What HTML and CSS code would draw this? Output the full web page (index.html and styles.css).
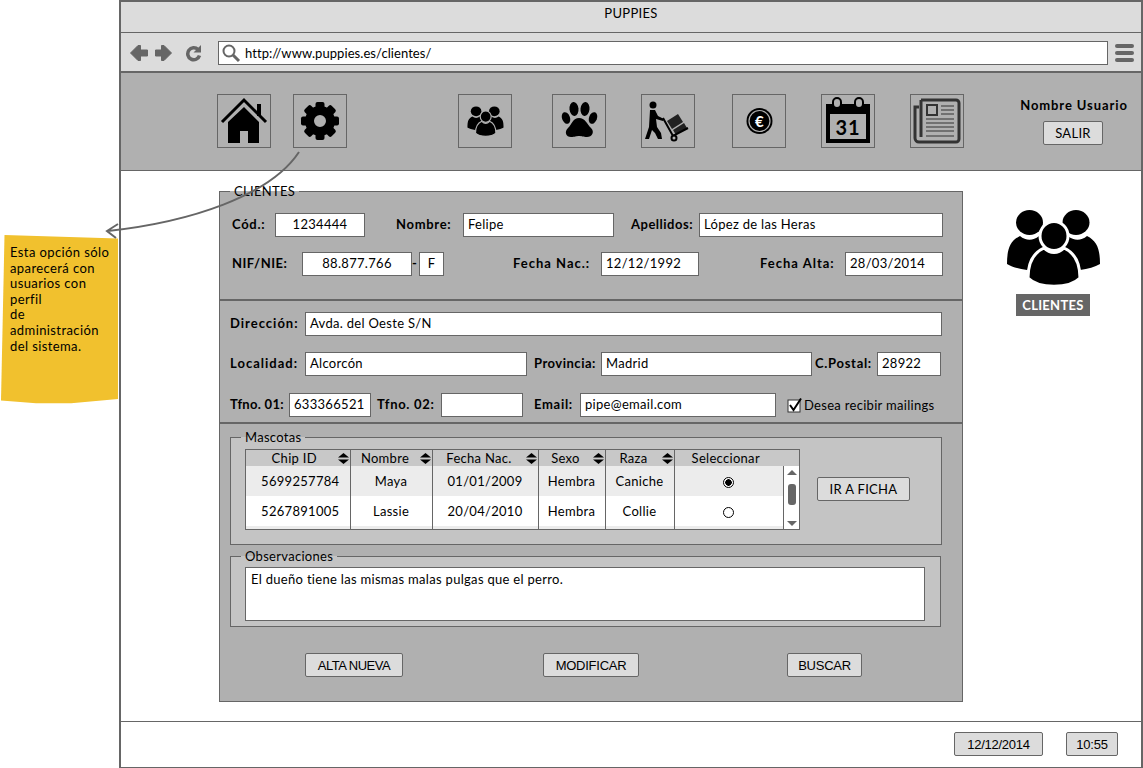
FILE: index.html
```html
<!DOCTYPE html>
<html lang="es">

<head>
    <meta charset="UTF-8">
    <title>Puppies - Clientes</title>
    <link rel="stylesheet" href="styles.css">
</head>

<body>
    <!-- Shared icons -->
    <svg class="defs" width="0" height="0">
        <symbol id="users" viewBox="0 0 93 79">
            <ellipse cx="22.500" cy="13.500" rx="13.500" ry="12.500" />
            <ellipse cx="69" cy="13.500" rx="13.500" ry="12.500" />
            <path d="M0 55C0 40 3 32 13 27C19 32 26 32 32 27C36 29 38 32 39 36L28 62L20 61C12 60 5 58 0 55Z" />
            <path d="M93 55C93 40 90 32 80 27C74 32 67 32 61 27C57 29 55 32 54 36L65 62L73 61C81 60 88 58 93 55Z" />
            <ellipse cx="47" cy="27" rx="14" ry="14.500" class="user-gap" />
            <path d="M21 69C21 52 28 43 37 39C43 45 51 45 57 39C66 43 73 52 73 69C62 80 32 80 21 69Z" class="user-gap" />
        </symbol>
        <symbol id="sort" viewBox="0 0 11 11">
            <path d="M5.500 0L11 4.500H0ZM0 6.500H11L5.500 11Z" />
        </symbol>
    </svg>

    <!-- Note with its arrow -->
    <aside class="note">Esta opción sólo<br>aparecerá con<br>usuarios con<br>perfil<br>de<br>administración<br>del sistema.</aside>
    <svg class="arrow" width="1143" height="768" viewBox="0 0 1143 768">
        <path d="M299 152C270 196 190 222 108 231M118 224L107 231L116 238" />
    </svg>

    <div class="window">
        <div class="titlebar">PUPPIES</div>

        <div class="toolbar">
            <svg class="tool-nav" width="72" height="18" viewBox="0 0 72 18">
                <path d="M0.500 9L8 1.500H10.500V6H17.500V12H10.500V16.500H8Z" class="nav-arrow" />
                <path d="M41.500 9L34 1.500H31.500V6H25.500V12H31.500V16.500H34Z" class="nav-arrow" />
                <path d="M68 5.500A6 6 0 1 0 69.500 11.500" class="reload" />
                <path d="M71 1V8.500H63.500Z" />
            </svg>
            <div class="urlbar">
                <svg width="20" height="20" viewBox="0 0 20 20">
                    <circle cx="8" cy="8" r="5.500" class="glass" />
                    <path d="M12 12L18 18" class="glass-handle" />
                </svg>
                <span class="url-text">http://www.puppies.es/clientes/</span>
            </div>
            <div class="burger"><i></i><i></i><i></i></div>
        </div>

        <nav class="topnav">
            <div class="navbox ico-home">
                <svg width="52" height="52" viewBox="0 0 52 52">
                    <path d="M4 27L26 5L48 27" class="roof" />
                    <rect x="39" y="9" width="4" height="12" />
                    <path d="M10 27L26 12L41 27V48H30V36H22V48H10Z" />
                </svg>
            </div>
            <div class="navbox ico-gear">
                <svg width="52" height="52" viewBox="0 0 52 52">
                    <g>
                        <rect x="21.500" y="7" width="9" height="38" rx="2" />
                        <rect x="21.500" y="7" width="9" height="38" rx="2" transform="rotate(45 26 26)" />
                        <rect x="21.500" y="7" width="9" height="38" rx="2" transform="rotate(90 26 26)" />
                        <rect x="21.500" y="7" width="9" height="38" rx="2" transform="rotate(135 26 26)" />
                    </g>
                    <circle cx="26" cy="26" r="10.500" class="gear-ring" />
                </svg>
            </div>
            <div class="navbox ico-users">
                <svg width="37" height="31" viewBox="0 0 93 79"><use href="#users" /></svg>
            </div>
            <div class="navbox ico-paw">
                <svg width="52" height="52" viewBox="0 0 52 52">
                    <ellipse cx="13" cy="23" rx="4" ry="6" transform="rotate(-20 13 23)" />
                    <ellipse cx="21" cy="14" rx="4.500" ry="7" transform="rotate(-6 21 14)" />
                    <ellipse cx="32" cy="14" rx="4.500" ry="7" transform="rotate(6 32 14)" />
                    <ellipse cx="40" cy="23" rx="4" ry="6" transform="rotate(20 40 23)" />
                    <path d="M26 23C32 23 34 29 38 33C42 37 39 42 34 42C30 42 29 41 26 41C23 41 22 42 18 42C13 42 11 37 15 33C19 29 20 23 26 23Z" />
                </svg>
            </div>
            <div class="navbox ico-delivery">
                <svg width="52" height="52" viewBox="0 0 52 52">
                    <circle cx="11" cy="10" r="3.500" />
                    <path d="M8 15H13L16 21L22 24L21 26L14 24L15 32L19 38L20 44H16L13 38L10 35L7 44H3L7 32Z" />
                    <path d="M25 26L36 19L41 27L30 34Z" class="crate" />
                    <path d="M31 35L42 28L45 33L34 40Z" class="crate" />
                    <path d="M21 23L31 41L46 33" class="truck" />
                    <circle cx="32" cy="43" r="2.500" class="wheel" />
                </svg>
            </div>
            <div class="navbox ico-euro">
                <svg width="52" height="52" viewBox="0 0 52 52">
                    <circle cx="26.500" cy="26" r="13" />
                    <circle cx="26.500" cy="26" r="10.500" class="coin-line" />
                    <text x="26.500" y="31.500" class="coin-sign">€</text>
                </svg>
            </div>
            <div class="navbox ico-calendar">
                <svg width="52" height="52" viewBox="0 0 52 52">
                    <path d="M4 9H48V48H4Z" />
                    <rect x="8" y="19" width="36" height="25" fill="#b0b0b0" />
                    <rect x="11" y="3" width="8" height="10" rx="4" class="ring" />
                    <rect x="33" y="3" width="8" height="10" rx="4" class="ring" />
                    <text x="26" y="40" class="cal-num">31</text>
                </svg>
            </div>
            <div class="navbox ico-news">
                <svg width="52" height="52" viewBox="0 0 52 52">
                    <path d="M10 5H45A3 3 0 0 1 48 8V44A3 3 0 0 1 45 47H8A4 4 0 0 1 4 43V12H8M10 5V42" class="news" />
                    <rect x="16" y="10" width="10" height="10" class="news-pic" />
                    <path d="M30 11H43M30 15H43M30 19H43M15 24H43M15 28H43M15 32H43M15 36H43M15 41H43" class="news-thin" />
                </svg>
            </div>
            <div class="user-box">
                <div class="user-name">Nombre Usuario</div>
                <div class="btn btn-salir">SALIR</div>
            </div>
        </nav>

        <main class="content">
            <fieldset class="panel">
                <legend>CLIENTES</legend>

                <section class="sec sec-ident">
                    <div class="row">
                        <span class="lbl w43">Cód.:</span>
                        <div class="field center w90">1234444</div>
                        <span class="lbl w67 ml31">Nombre:</span>
                        <div class="field w151">Felipe</div>
                        <span class="lbl tight w68 ml17">Apellidos:</span>
                        <div class="field w244">López de las Heras</div>
                    </div>
                    <div class="row">
                        <span class="lbl tight w70">NIF/NIE:</span>
                        <div class="field center w110">88.877.766</div>
                        <span class="lbl w7">-</span>
                        <div class="field center w25">F</div>
                        <span class="lbl wide w88 ml69">Fecha Nac.:</span>
                        <div class="field w98">12/12/1992</div>
                        <span class="lbl wide w85 ml61">Fecha Alta:</span>
                        <div class="field w98">28/03/2014</div>
                    </div>
                </section>

                <section class="sec sec-address">
                    <div class="row">
                        <span class="lbl wide w75">Dirección:</span>
                        <div class="field w637">Avda. del Oeste S/N</div>
                    </div>
                    <div class="row">
                        <span class="lbl wide w75">Localidad:</span>
                        <div class="field w222">Alcorcón</div>
                        <span class="lbl tight w67 ml7">Provincia:</span>
                        <div class="field w211">Madrid</div>
                        <span class="lbl w62 ml3">C.Postal:</span>
                        <div class="field w64">28922</div>
                    </div>
                    <div class="row">
                        <span class="lbl slim w59">Tfno. 01:</span>
                        <div class="field w82">633366521</div>
                        <span class="lbl w64 ml6">Tfno. 02:</span>
                        <div class="field w82"></div>
                        <span class="lbl w46 ml11">Email:</span>
                        <div class="field w196">pipe@email.com</div>
                        <svg class="check" width="16" height="16" viewBox="0 0 16 16">
                            <rect x="1" y="3" width="12" height="12" class="check-box" />
                            <path d="M3 8L6.500 13L14 1.500" class="check-mark" />
                        </svg>
                        <span class="mail-text">Desea recibir mailings</span>
                    </div>
                </section>

                <section class="sec sec-lower">
                    <fieldset class="group group-pets">
                        <legend>Mascotas</legend>
                        <div class="pets-inner">
                            <div class="grid-wrap">
                                <table class="pets">
                                    <colgroup>
                                        <col class="c-chip"><col class="c-name"><col class="c-date"><col class="c-sex"><col class="c-breed"><col>
                                    </colgroup>
                                    <thead>
                                        <tr>
                                            <th><div class="th-in"><span>Chip ID</span><svg width="11" height="11"><use href="#sort" /></svg></div></th>
                                            <th><div class="th-in"><span>Nombre</span><svg width="11" height="11"><use href="#sort" /></svg></div></th>
                                            <th><div class="th-in"><span>Fecha Nac.</span><svg width="11" height="11"><use href="#sort" /></svg></div></th>
                                            <th><div class="th-in"><span>Sexo</span><svg width="11" height="11"><use href="#sort" /></svg></div></th>
                                            <th><div class="th-in"><span>Raza</span><svg width="11" height="11"><use href="#sort" /></svg></div></th>
                                            <th class="th-select">Seleccionar</th>
                                        </tr>
                                    </thead>
                                    <tbody>
                                        <tr>
                                            <td>5699257784</td><td>Maya</td><td>01/01/2009</td><td>Hembra</td><td>Caniche</td>
                                            <td class="td-radio"><span class="radio on"></span></td>
                                        </tr>
                                        <tr>
                                            <td>5267891005</td><td>Lassie</td><td>20/04/2010</td><td>Hembra</td><td>Collie</td>
                                            <td class="td-radio"><span class="radio"></span></td>
                                        </tr>
                                        <tr>
                                            <td></td><td></td><td></td><td></td><td></td><td></td>
                                        </tr>
                                    </tbody>
                                </table>
                                <div class="scrollbar">
                                    <i class="sb-up"></i>
                                    <i class="sb-thumb"></i>
                                    <i class="sb-down"></i>
                                </div>
                            </div>
                            <div class="btn btn-ficha">IR A FICHA</div>
                        </div>
                    </fieldset>

                    <fieldset class="group group-notes">
                        <legend>Observaciones</legend>
                        <div class="notes-box">El dueño tiene las mismas malas pulgas que el perro.</div>
                    </fieldset>

                    <div class="actions">
                        <div class="btn btn-plain btn-alta">ALTA NUEVA</div>
                        <div class="btn btn-plain btn-mod">MODIFICAR</div>
                        <div class="btn btn-plain btn-buscar">BUSCAR</div>
                    </div>
                </section>
            </fieldset>

            <div class="side">
                <svg width="93" height="79" viewBox="0 0 93 79"><use href="#users" /></svg>
                <div class="side-label">CLIENTES</div>
            </div>
        </main>

        <footer class="statusbar">
            <div class="btn btn-plain btn-date">12/12/2014</div>
            <div class="btn btn-plain btn-time">10:55</div>
        </footer>
    </div>
</body>

</html>
```

FILE: styles.css
```css
/* Global Reset */
* {
    margin: 0;
    padding: 0;
    box-sizing: border-box;
}

body {
    width: 1143px;
    height: 768px;
    overflow: hidden;
    position: relative;
    background: #fff;
    color: #000;
    font-family: 'Lato', 'Liberation Sans', sans-serif;
    font-size: 13px;
    letter-spacing: 0.3px;
}

.defs {
    position: absolute;
}

.user-gap {
    stroke: var(--gap);
    stroke-width: 3;
}

/* Note and arrow */
.note {
    position: absolute;
    left: 1px;
    top: 235px;
    width: 117px;
    height: 169px;
    padding: 10px 0 0 9px;
    line-height: 15.6px;
    letter-spacing: 0.4px;
    background: #f1c12e;
    clip-path: polygon(3% 0, 100% 2%, 100% 97%, 60% 99.500%, 30% 99.500%, 0 98%);
    white-space: nowrap;
}

.arrow {
    position: absolute;
    left: 0;
    top: 0;
    z-index: 2;
    pointer-events: none;
}

.arrow path {
    fill: none;
    stroke: #666;
    stroke-width: 2;
}

/* Browser window */
.window {
    margin-left: 119px;
    width: 1024px;
    height: 768px;
    border: 2px solid #666;
    border-bottom-width: 1px;
    display: flex;
    flex-direction: column;
}

.titlebar {
    height: 31px;
    padding-top: 3px;
    text-align: center;
    background: #dcdcdc;
    border-bottom: 1px solid #666;
}

.toolbar {
    height: 40px;
    display: flex;
    align-items: center;
    padding: 1px 7px 0 9px;
    background: #dcdcdc;
    border-bottom: 2px solid #666;
}

.tool-nav {
    fill: #666;
    flex: none;
}

.nav-arrow {
    stroke: #666;
    stroke-width: 1;
    stroke-linejoin: round;
}

.reload {
    fill: none;
    stroke: #666;
    stroke-width: 3.500;
}

.urlbar {
    width: 890px;
    height: 24px;
    margin-left: 16px;
    display: flex;
    align-items: center;
    gap: 4px;
    padding-left: 2px;
    background: #fff;
    border: 1px solid #666;
}

.url-text {
    letter-spacing: 0.07px;
}

.glass {
    fill: none;
    stroke: #666;
    stroke-width: 2;
}

.glass-handle {
    fill: none;
    stroke: #666;
    stroke-width: 3;
}

.burger {
    width: 19px;
    margin-left: 7px;
    display: flex;
    flex-direction: column;
    gap: 3px;
}

.burger i {
    height: 4px;
    background: #666;
    border-radius: 2px;
}

/* Top navigation */
.topnav {
    height: 98px;
    display: flex;
    padding: 21px 0 0 96px;
    background: #b0b0b0;
    border-bottom: 1px solid #666;
}

.navbox {
    width: 54px;
    height: 54px;
    flex: none;
    display: flex;
    align-items: center;
    justify-content: center;
    border: 1px solid #666;
}

.ico-gear { margin-left: 22px; }
.ico-users { margin-left: 111px; --gap: #b0b0b0; }
.ico-paw { margin-left: 40px; }
.ico-delivery { margin-left: 35px; }
.ico-euro { margin-left: 37px; }
.ico-calendar { margin-left: 35px; }
.ico-news { margin-left: 35px; }

.roof {
    fill: none;
    stroke: #000;
    stroke-width: 3;
}

.gear-ring {
    fill: none;
    stroke: #000;
    stroke-width: 9;
}

.ico-gear circle {
    fill: #b0b0b0;
    stroke: #000;
}

.crate {
    fill: #222;
}

.truck {
    fill: none;
    stroke: #000;
    stroke-width: 2;
}

.wheel {
    fill: #b0b0b0;
    stroke: #000;
    stroke-width: 2;
}

.coin-line {
    fill: none;
    stroke: #b0b0b0;
    stroke-width: 1.200;
}

.coin-sign {
    fill: #fff;
    font-size: 15px;
    font-weight: bold;
    text-anchor: middle;
}

.ring {
    fill: #b0b0b0;
    stroke: #000;
    stroke-width: 2;
}

.cal-num {
    font-size: 20px;
    font-weight: bold;
    text-anchor: middle;
    letter-spacing: 1px;
}

.news {
    fill: none;
    stroke: #333;
    stroke-width: 3;
}

.news-pic {
    fill: none;
    stroke: #333;
    stroke-width: 2;
}

.news-thin {
    fill: none;
    stroke: #333;
    stroke-width: 1;
}

.user-box {
    width: 108px;
    margin-left: 56px;
    display: flex;
    flex-direction: column;
    align-items: center;
}

.user-name {
    margin-top: 3px;
    font-weight: bold;
    letter-spacing: 0.9px;
    white-space: nowrap;
}

/* Buttons */
.btn {
    height: 24px;
    display: flex;
    align-items: center;
    justify-content: center;
    background: #dcdcdc;
    border: 1px solid #666;
    border-radius: 2px;
    white-space: nowrap;
}

.btn-plain {
    font-family: 'Liberation Sans', Arial, sans-serif;
    font-size: 13px;
    letter-spacing: -0.25px;
}

.btn-salir {
    width: 60px;
    margin: 8px 2px 0 0;
}

/* Main content */
.content {
    height: 551px;
    display: flex;
    padding: 12px 0 0 98px;
    border-bottom: 1px solid #666;
}

.panel {
    width: 744px;
    height: 519px;
    flex: none;
    background: #b0b0b0;
    border: 1px solid #666;
}

.panel > legend {
    margin-left: 10px;
    padding: 0 4px;
    line-height: 16px;
}

.sec-ident {
    height: 102px;
    padding: 14px 0 0 12px;
    border-bottom: 2px solid #666;
}

.sec-address {
    height: 123px;
    padding: 11px 0 0 10px;
    border-bottom: 2px solid #666;
}

.sec-lower {
    padding: 5px 0 0 10px;
}

.row {
    display: flex;
    align-items: center;
    height: 24px;
    margin-bottom: 15px;
}

.sec-address .row {
    margin-bottom: 16px;
}

.sec-address .row:nth-child(2) {
    margin-bottom: 17px;
}

.lbl {
    flex: none;
    padding-bottom: 2px;
    font-weight: bold;
    letter-spacing: 0.7px;
    white-space: nowrap;
}

.lbl.wide { letter-spacing: 1px; }
.lbl.tight { letter-spacing: 0.5px; }
.lbl.slim { letter-spacing: 0.3px; }

.field {
    flex: none;
    height: 24px;
    line-height: 21px;
    padding-left: 4px;
    background: #fff;
    border: 1px solid #666;
    white-space: nowrap;
}

.center {
    padding-left: 0;
    text-align: center;
}

.w7 { width: 7px; }
.w25 { width: 25px; }
.w43 { width: 43px; }
.w46 { width: 46px; }
.w59 { width: 59px; }
.w62 { width: 62px; }
.w64 { width: 64px; }
.w67 { width: 67px; }
.w68 { width: 68px; }
.w70 { width: 70px; }
.w75 { width: 75px; }
.w82 { width: 82px; }
.w85 { width: 85px; }
.w88 { width: 88px; }
.w90 { width: 90px; }
.w98 { width: 98px; }
.w110 { width: 110px; }
.w151 { width: 151px; }
.w196 { width: 196px; }
.w211 { width: 211px; }
.w222 { width: 222px; }
.w244 { width: 244px; }
.w637 { width: 637px; }

.ml3 { margin-left: 3px; }
.ml6 { margin-left: 6px; }
.ml7 { margin-left: 7px; }
.ml11 { margin-left: 11px; }
.ml17 { margin-left: 17px; }
.ml31 { margin-left: 31px; }
.ml61 { margin-left: 61px; }
.ml69 { margin-left: 69px; }

.check {
    flex: none;
    margin-left: 11px;
}

.check-box {
    fill: #fff;
    stroke: #333;
}

.check-mark {
    fill: none;
    stroke: #000;
    stroke-width: 2;
}

.mail-text {
    margin-left: 1px;
    white-space: nowrap;
}

/* Inner groups */
.group {
    background: #c4c4c4;
    border: 1px solid #666;
}

.group > legend {
    margin-left: 10px;
    padding: 0 4px;
    line-height: 16px;
}

.group-pets {
    width: 712px;
    height: 116px;
}

.pets-inner {
    display: flex;
    padding: 4px 0 0 14px;
}

.grid-wrap {
    width: 555px;
    height: 81px;
    flex: none;
    position: relative;
    overflow: hidden;
    border: 1px solid #666;
}

.pets {
    width: 100%;
    border-collapse: collapse;
    table-layout: fixed;
}

.c-chip { width: 104px; }
.c-name { width: 82px; }
.c-date { width: 106px; }
.c-sex { width: 67px; }
.c-breed { width: 69px; }

.pets th {
    height: 16px;
    padding: 0;
    font-weight: normal;
    background: #c8c8c8;
    border-right: 1px solid #666;
}

.pets th:last-child,
.pets td:last-child {
    border-right: none;
}

.th-in {
    display: flex;
    align-items: center;
    padding: 0 1px 0 0;
}

.pets th:first-child .th-in {
    padding-left: 5px;
}

.th-in span {
    flex: 1;
    text-align: center;
}

.th-select {
    padding-right: 22px !important;
}

.pets td {
    height: 30px;
    padding: 0;
    text-align: center;
    background: #fff;
    border-right: 1px solid #666;
}

.pets td:first-child {
    padding-left: 5px;
}

.pets tbody tr:nth-child(odd) td {
    background: #ececec;
}

.td-radio {
    padding-right: 16px !important;
}

.radio {
    display: inline-block;
    width: 11px;
    height: 11px;
    vertical-align: middle;
    border: 1px solid #000;
    border-radius: 50%;
    background: #fff;
}

.radio.on {
    background: radial-gradient(circle, #000 0 3px, #fff 3.500px);
}

.scrollbar {
    position: absolute;
    right: 0;
    top: 16px;
    bottom: 0;
    width: 16px;
    display: flex;
    flex-direction: column;
    align-items: center;
    background: #fff;
    border-left: 1px solid #666;
}

.sb-up {
    margin-top: 4px;
    border-left: 5px solid transparent;
    border-right: 5px solid transparent;
    border-bottom: 5px solid #666;
}

.sb-thumb {
    width: 8px;
    height: 21px;
    margin-top: 9px;
    background: #666;
    border-radius: 3px;
}

.sb-down {
    margin-top: auto;
    margin-bottom: 3px;
    border-left: 5px solid transparent;
    border-right: 5px solid transparent;
    border-top: 5px solid #666;
}

.btn-ficha {
    width: 93px;
    margin: 28px 0 0 17px;
}

.group-notes {
    width: 711px;
    height: 79px;
    margin-top: 3px;
}

.notes-box {
    width: 680px;
    height: 54px;
    margin: 3px 0 0 14px;
    padding: 3px 5px;
    background: #fff;
    border: 1px solid #666;
}

.actions {
    display: flex;
    margin-top: 26px;
    padding-left: 75px;
}

.btn-alta { width: 98px; letter-spacing: -0.5px; }
.btn-mod { width: 96px; margin-left: 140px; }
.btn-buscar { width: 75px; margin-left: 148px; }

/* Side label */
.side {
    --gap: #fff;
    margin: 26px 0 0 44px;
    width: 93px;
    display: flex;
    flex-direction: column;
    align-items: center;
}

.side-label {
    width: 74px;
    height: 22px;
    margin: 6px 1px 0 0;
    line-height: 22px;
    text-align: center;
    color: #fff;
    background: #666;
    font-weight: bold;
}

/* Footer */
.statusbar {
    flex: 1;
    display: flex;
    justify-content: flex-end;
    padding: 10px 23px 0 0;
    gap: 23px;
}

.btn-date { width: 89px; }
.btn-time { width: 52px; }
```
